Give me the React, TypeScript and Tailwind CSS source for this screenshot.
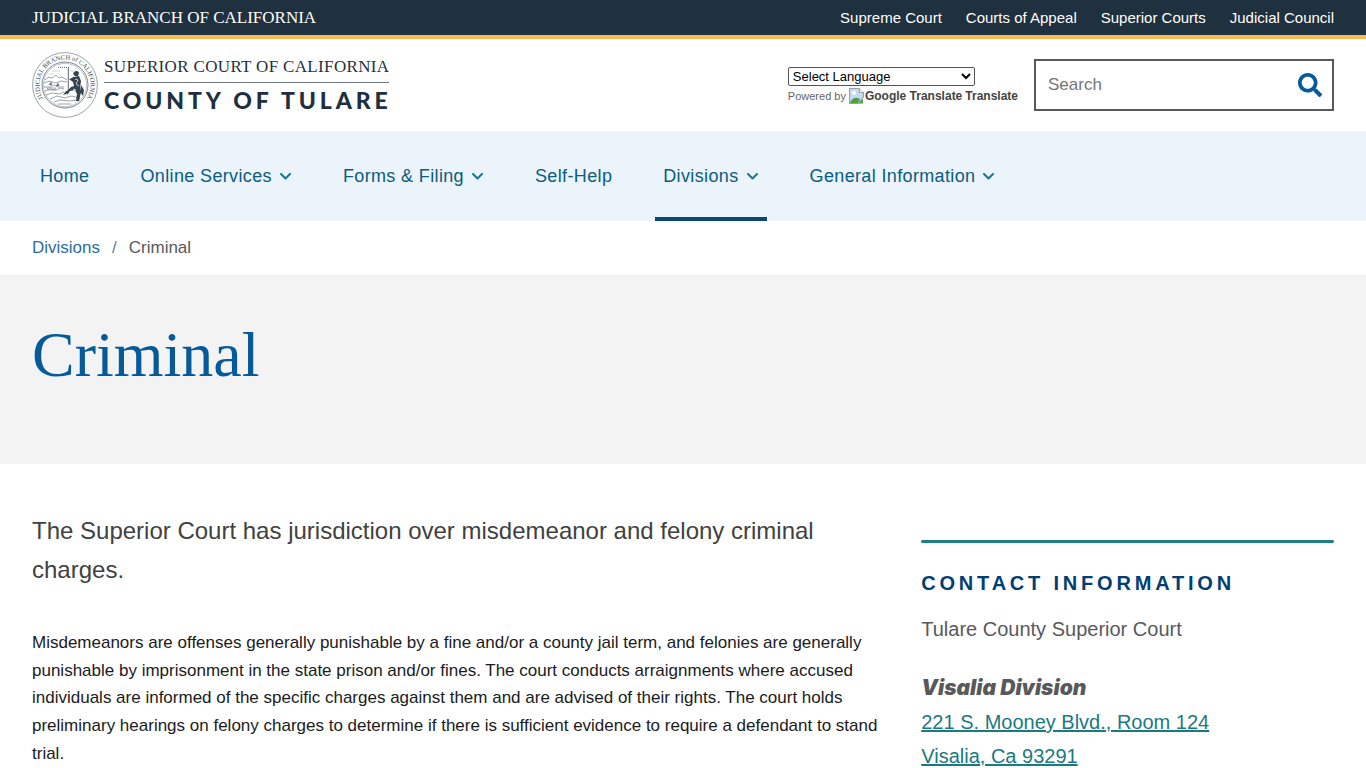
import React from 'react';
import { FaSearch } from 'react-icons/fa';

const topLinks = ['Supreme Court', 'Courts of Appeal', 'Superior Courts', 'Judicial Council'];

const navItems = [
  { label: 'Home', menu: false, active: false },
  { label: 'Online Services', menu: true, active: false },
  { label: 'Forms & Filing', menu: true, active: false },
  { label: 'Self-Help', menu: false, active: false },
  { label: 'Divisions', menu: true, active: true },
  { label: 'General Information', menu: true, active: false },
];

const Chevron = () => (
  <svg width="12" height="8" viewBox="0 0 12 8" fill="none" stroke="#14788c" strokeWidth="2" aria-hidden="true">
    <path d="M1 2l4.500 4.500L10 2" strokeLinecap="round" strokeLinejoin="round" />
  </svg>
);

const Seal = () => (
  <svg className="size-[66px] shrink-0" viewBox="0 0 66 66" fill="none" stroke="#5b6873" aria-hidden="true">
    <circle cx="33" cy="33" r="32.4" strokeWidth="0.6" />
    <circle cx="33" cy="33" r="23" strokeWidth="0.8" />
    <circle cx="33" cy="33" r="21.6" strokeWidth="0.4" />
    <path id="seal-arc" d="M15 51A25.500 25.500 0 1 1 51 51" stroke="none" />
    <text fill="#33434f" stroke="none" fontSize="6.6" fontFamily="Liberation Serif, serif">
      <textPath href="#seal-arc" startOffset="50%" textAnchor="middle">JUDICIAL BRANCH of CALIFORNIA</textPath>
    </text>
    {/* stars and sky */}
    <path d="M26 15.4h12" strokeWidth="1" strokeDasharray="1 1" />
    <path d="M20 19h8M38 19h4M17 22h5" strokeWidth="0.3" />
    {/* hills and bay */}
    <path d="M13 28l4-3 3 1 4-3 3 3 3-1 5 3M12 31l6-2 5 2 6-2 6 1M12 35h7l3-2 4 2h6M13 39l5-2 6 1 5-2 3 1M14 43l6-2 7 1 5-2M18 47l7-3 8 2 6-2 9 2M22 50l6-2 9 1 7-1M26 52h13" strokeWidth="0.6" />
    <path d="M17 33l2-3 1 3zM24 34l2-3 1 3z" fill="#66747f" strokeWidth="0.4" />
    <path d="M15 36h9l-1 2h-7z" strokeWidth="0.5" />
    {/* spear */}
    <path d="M36.3 16v25" stroke="#33434f" strokeWidth="0.8" />
    {/* seated figure */}
    <g fill="#33434f" stroke="none">
      <path d="M42 20c2-2 5-1 5 1l-1 3h-3l-2-2z" />
      <path d="M41 25l6-1 2 5-1 7 1 4-2 9h-3l1-7-2-4-5 1-3 4-1-3 5-5 3-1-1-4-4-3 3-1z" />
      <path d="M34 39l-3 4 3-1 2-3zM49 33l3 5-1 6-3-4z" />
    </g>
    <path d="M43 27l3 1-2 4 3 2M41 37l3 1" stroke="#ffffff" strokeWidth="0.7" />
  </svg>
);

const BrokenImage = () => (
  <svg className="size-4 shrink-0" viewBox="0 0 16 16" aria-hidden="true">
    <path d="M.5.5h10l4 4v5l-2 1-3 5h-9z" fill="#c6d9f5" stroke="#9a9fa5" />
    <path d="M10.500.5v4h4" fill="#fff" stroke="#9a9fa5" />
    <circle cx="5" cy="5" r="2" fill="#fff" />
    <path d="M1 15c1-4 5-6 8-5l2 1-2 4z" fill="#4fa040" />
    <path d="M9 15.500l5-5v5z" fill="#4fa040" />
  </svg>
);

const TopBar = () => (
  <div className="flex items-center justify-between border-b-4 border-[#f5bc51] bg-[#1f303e] px-8 py-1.5 text-white">
    <a href="#" className="font-['Liberation_Serif',serif] text-[17px] leading-[23px]">
      JUDICIAL BRANCH OF CALIFORNIA
    </a>
    <nav aria-label="Court system" className="flex gap-6 text-[15px] leading-5">
      {topLinks.map((label) => (
        <a key={label} href="#">{label}</a>
      ))}
    </nav>
  </div>
);

const Header = () => (
  <header className="flex items-center justify-between bg-white px-8 py-[13px]">
    <a href="#" className="flex items-center gap-1.5 text-[#1f303e]">
      <Seal />
      <span className="flex flex-col pb-0.5">
        <span className="border-b border-[#6a7884] pb-[3px] font-['Liberation_Serif',serif] text-[17px] leading-6 tracking-[0.02em]">
          SUPERIOR COURT OF CALIFORNIA
        </span>
        <span className="-mr-1 pt-1 font-[Lato,sans-serif] text-[23px] font-black leading-[26px] tracking-[0.17em]">
          COUNTY OF TULARE
        </span>
      </span>
    </a>
    <div className="flex items-center gap-4">
      <div className="flex flex-col gap-0.5">
        <select
          aria-label="Language Translate Widget"
          className="h-[19px] w-[187px] appearance-auto rounded-xs border border-[#555] bg-white text-[13px] text-black"
        >
          <option>Select Language</option>
        </select>
        <div className="flex items-center text-[11px] leading-4 text-[#666]">
          <span>Powered by</span>
          <a href="#" className="ml-[3px] flex items-center text-xs font-bold text-[#444]">
            <BrokenImage />
            <span>Google Translate</span>
            <span className="ml-[3px]">Translate</span>
          </a>
        </div>
      </div>
      <form className="flex h-13 w-75 items-center border-2 border-[#58595b] pr-2.5 pl-3">
        <input
          type="text"
          aria-label="Search"
          placeholder="Search"
          className="min-w-0 flex-1 text-[17px] outline-none placeholder:text-[#757575]"
        />
        <button type="button" aria-label="Submit search" className="text-[#065a9a]">
          <FaSearch size={24} />
        </button>
      </form>
    </div>
  </header>
);

const MainNav = () => (
  <nav aria-label="Main" className="flex gap-[35px] bg-[#ebf4fb] px-8">
    {navItems.map((item) => (
      <a
        key={item.label}
        href="#"
        className={`flex items-center gap-2 border-b-4 px-2 pt-8 pb-7 text-lg leading-[26px] tracking-[0.02em] text-[#0a5c80] ${
          item.active ? 'border-[#0b4870]' : 'border-transparent'
        }`}
      >
        {item.label}
        {item.menu && <Chevron />}
      </a>
    ))}
  </nav>
);

const ContactInfo = () => (
  <aside className="pt-[29px] text-xl leading-[34px] text-[#58595b]">
    <div className="h-[3px] rounded-full bg-[#1f7f86]" />
    <h2 className="mt-[23px] font-bold tracking-[0.19em] text-[#003e73]">CONTACT INFORMATION</h2>
    <p className="mt-3">Tulare County Superior Court</p>
    <p className="mt-[25px]">
      <strong className="font-[Inter,sans-serif] text-[21px] font-black italic">Visalia Division</strong>
      <br />
      <a href="#" className="text-[#1a7a80] underline">
        221 S. Mooney Blvd., Room 124
        <br />
        Visalia, Ca 93291
      </a>
    </p>
  </aside>
);

export default function App() {
  return (
    <div className="min-h-screen overflow-x-hidden bg-white font-['Liberation_Sans',Arial,sans-serif]">
      <TopBar />
      <Header />
      <MainNav />
      <nav aria-label="Breadcrumb" className="flex gap-3 px-8 py-3.5 text-[17px] leading-[26px] text-[#58595b]">
        <a href="#" className="text-[#2d6c9f]">Divisions</a>
        <span className="text-[#5f7f99]">/</span>
        <span>Criminal</span>
      </nav>
      <section className="bg-[#f3f3f3] px-8 pt-12 pb-[77px]">
        <h1 className="font-['Liberation_Serif',serif] text-[64px] leading-16 text-[#065a9a]">Criminal</h1>
      </section>
      <main className="grid grid-cols-[27fr_13fr] gap-8 px-8 pt-[47px]">
        <div>
          <p className="text-2xl leading-relaxed text-[#414141]">
            The Superior Court has jurisdiction over misdemeanor and felony criminal charges.
          </p>
          <p className="mt-10 text-[17px] leading-relaxed text-[#1b1b1b]">
            Misdemeanors are offenses generally punishable by a fine and/or a county jail term, and felonies are
            generally punishable by imprisonment in the state prison and/or fines. The court conducts arraignments where
            accused individuals are informed of the specific charges against them and are advised of their rights. The
            court holds preliminary hearings on felony charges to determine if there is sufficient evidence to require a
            defendant to stand trial.
          </p>
        </div>
        <ContactInfo />
      </main>
    </div>
  );
}
